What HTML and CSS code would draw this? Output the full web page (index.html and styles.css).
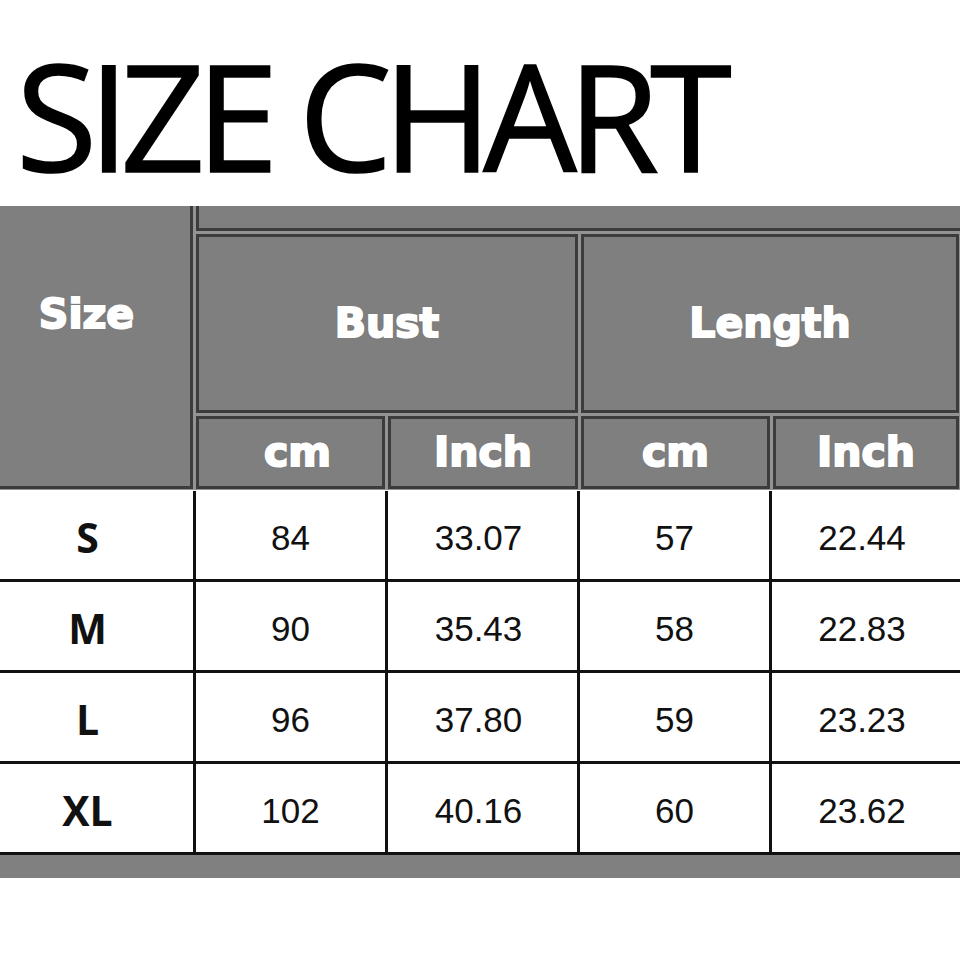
FILE: index.html
```html
<!DOCTYPE html>
<html>
<head>
<meta charset="utf-8">
<link rel="stylesheet" href="styles.css">
</head>
<body>
<div class="title">SIZE CHART</div>
<div class="head">
  <div class="head-grid">
    <div class="hc size">Size</div>
    <div class="hc strip"></div>
    <div class="hc group">Bust</div>
    <div class="hc group">Length</div>
    <div class="hc sub sub-first">cm</div>
    <div class="hc sub">Inch</div>
    <div class="hc sub">cm</div>
    <div class="hc sub">Inch</div>
  </div>
</div>
<div class="data">
  <div class="cell label">S</div><div class="cell">84</div><div class="cell">33.07</div><div class="cell">57</div><div class="cell">22.44</div>
  <div class="cell label">M</div><div class="cell">90</div><div class="cell">35.43</div><div class="cell">58</div><div class="cell">22.83</div>
  <div class="cell label">L</div><div class="cell">96</div><div class="cell">37.80</div><div class="cell">59</div><div class="cell">23.23</div>
  <div class="cell label">XL</div><div class="cell">102</div><div class="cell">40.16</div><div class="cell">60</div><div class="cell">23.62</div>
</div>
<div class="band"></div>
</body>
</html>
```
FILE: styles.css
```css
html, body {
  margin: 0;
  padding: 0;
  background: #ffffff;
}
body {
  width: 960px;
  height: 960px;
  overflow: hidden;
}
.title {
  font-family: "Open Sans", "Noto Sans", sans-serif;
  font-weight: 400;
  font-size: 148px;
  line-height: 150px;
  height: 150px;
  padding: 40px 0 16px 16px;
  color: #000;
  white-space: nowrap;
  letter-spacing: -9px;
  -webkit-text-stroke: 1.6px #000;
}
.head {
  height: 284px;
  overflow: hidden;
  background: #939393;
}
.head-grid {
  display: grid;
  grid-template-columns: 197px 189px 190px 189px 186px;
  grid-template-rows: 31px 179px 73px;
  column-gap: 3px;
  row-gap: 3px;
  margin: -6px 0 0 -4px;
  width: max-content;
}
.hc {
  box-sizing: border-box;
  border: 3px solid #3c3c3c;
  background: #7f7f7f;
  color: #ffffff;
  display: flex;
  align-items: center;
  justify-content: center;
  font-family: "DejaVu Sans", sans-serif;
  font-weight: bold;
  font-size: 41px;
  line-height: 1;
  -webkit-text-stroke: 2px #ffffff;
  text-shadow: 0 0 2px rgba(60, 60, 60, 0.5);
}
.size {
  grid-row: 1 / 4;
  grid-column: 1;
  align-items: flex-start;
  padding: 91px 16px 0 0;
}
.strip {
  grid-row: 1;
  grid-column: 2 / 6;
  margin-right: -10px;
}
.group:nth-child(3) {
  grid-column: 2 / 4;
}
.group:nth-child(4) {
  grid-column: 4 / 6;
}
.sub-first {
  padding-left: 14px;
}
.data {
  display: grid;
  grid-template-columns: 193px 189px 189px 189px 1fr;
  grid-auto-rows: 88px;
  gap: 3px;
  background: #111111;
  border-top: 1px solid #ffffff;
  padding-bottom: 3px;
}
.cell {
  background: #ffffff;
  display: flex;
  align-items: center;
  justify-content: center;
  font-family: "Liberation Sans", Arial, sans-serif;
  font-size: 35px;
  color: #111111;
  padding-top: 6px;
  box-sizing: border-box;
}
.cell:nth-child(5n+3),
.cell:nth-child(5n) {
  padding-right: 8px;
}
.label {
  font-family: "Open Sans", "Noto Sans", sans-serif;
  font-weight: 700;
  font-size: 41px;
  padding-top: 4px;
  padding-right: 18px;
}
.band {
  height: 23px;
  background: #808080;
}
```
